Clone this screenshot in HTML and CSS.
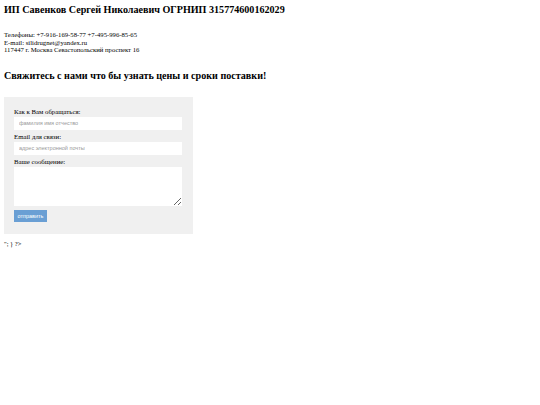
FILE: index.html
```html
<!DOCTYPE html>
<html lang="ru">
<head>
<meta charset="utf-8">
<title>ИП Савенков</title>
<link rel="stylesheet" href="styles.css">
</head>
<body>
<h1 class="title">ИП Савенков Сергей Николаевич ОГРНИП 315774600162029</h1>
<div class="contacts">
<div>Телефоны: +7-916-169-58-77 +7-495-996-85-65</div>
<div>E-mail: silidrugnet@yandex.ru</div>
<div>117447 г. Москва Севастопольский проспект 16</div>
</div>
<h2 class="subtitle">Свяжитесь с нами что бы узнать цены и сроки поставки!</h2>
<form class="form">
<label class="label">Как к Вам обращаться:</label>
<input class="field" type="text" placeholder="фамилия имя отчество">
<label class="label">Email для связи:</label>
<input class="field" type="text" placeholder="адрес электронной почты">
<label class="label">Ваше сообщение:</label>
<textarea class="area"></textarea>
<button class="btn" type="button">отправить</button>
</form>
<div class="tail">"; } ?&gt;</div>
</body>
</html>
```
FILE: styles.css
```css
html, body { background: #fff; }
body {
  margin: 0;
  padding: 0 4px;
  font-family: "Liberation Serif", "Times New Roman", serif;
  color: #000;
}
.title {
  margin: 3px 0 0;
  font-size: 10.1px;
  line-height: 13px;
  font-weight: bold;
}
.contacts {
  margin-top: 15px;
  font-size: 6.7px;
  line-height: 7.6px;
}
.subtitle {
  margin: 16px 0 0;
  font-size: 10.1px;
  line-height: 12px;
  font-weight: bold;
}
.form {
  margin-top: 15px;
  width: 169px;
  padding: 11px 10px 12px;
  background: #f0f0f0;
  display: flex;
  flex-direction: column;
}
.label {
  font-size: 6.8px;
  line-height: 7px;
  margin-bottom: 2px;
}
.field, .area {
  box-sizing: border-box;
  width: 168px;
  border: none;
  background: #fff;
  font-family: "Liberation Sans", Arial, sans-serif;
  font-size: 5.5px;
  padding: 0 5px;
  margin: 0 0 3px;
  outline: none;
}
.field { height: 13px; }
.field::placeholder { color: #999; }
.area { height: 39px; margin-bottom: 4px; resize: vertical; }
.btn {
  align-self: flex-start;
  width: 33px;
  height: 12px;
  padding: 0;
  border: none;
  background: #6a9fd4;
  color: #fff;
  font-family: "Liberation Sans", Arial, sans-serif;
  font-size: 5.5px;
}
.tail {
  margin-top: 6px;
  font-size: 6.5px;
  line-height: 8px;
}
```
